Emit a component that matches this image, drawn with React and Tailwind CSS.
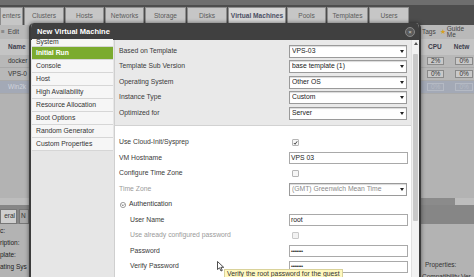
const tabs = [
  { label: 'enters', w: 'w-[23px]' },
  { label: 'Clusters', w: 'w-[40px]' },
  { label: 'Hosts', w: 'w-[39px]' },
  { label: 'Networks', w: 'w-[39px]' },
  { label: 'Storage', w: 'w-[41px]' },
  { label: 'Disks', w: 'w-[40px]' },
  { label: 'Virtual Machines', w: 'w-[58px]', active: true },
  { label: 'Pools', w: 'w-[39px]' },
  { label: 'Templates', w: 'w-[41px]' },
  { label: 'Users', w: 'w-[40px]' },
]

const sideItems = [
  'System',
  'Initial Run',
  'Console',
  'Host',
  'High Availability',
  'Resource Allocation',
  'Boot Options',
  'Random Generator',
  'Custom Properties',
]

function Select({ value, muted }) {
  return (
    <div className="flex h-[13px] w-[118px] items-center border border-[#9a9a9a] bg-white pl-[2px] shadow-[inset_0_1px_1px_rgba(0,0,0,0.15)]">
      <span className={`flex-1 truncate ${muted ? 'text-[#8a8a8a]' : 'text-[#222]'}`}>{value}</span>
      <span className="flex h-[9px] w-[8px] items-center justify-center">
        <span className="block h-0 w-0 border-x-[2px] border-t-[3px] border-x-transparent border-t-[#222]" />
      </span>
    </div>
  )
}

function Input({ value, password }) {
  return (
    <div className="flex h-[12px] w-[119px] items-center border border-[#a9a9a9] bg-white pl-[1px] text-[#222]">
      {password ? <span className="text-[5px] leading-none tracking-[-0.3px]">••••••••</span> : value}
    </div>
  )
}

function Check({ checked, muted }) {
  return (
    <div className={`ml-[3px] flex h-[7px] w-[7px] items-center justify-center rounded-[1px] border ${muted ? 'border-[#c8c8c8] bg-[#f2f2f2]' : 'border-[#b5b5b5] bg-[#f6f6f6]'}`}>
      {checked && (
        <svg width="6" height="6" viewBox="0 0 6 6">
          <path d="M1 3 L2.5 4.5 L5 1" stroke="#333" strokeWidth="1.1" fill="none" />
        </svg>
      )}
    </div>
  )
}

function Row({ label, children, muted, indent, h = 'h-[15.5px]' }) {
  return (
    <div className={`flex items-center ${h}`}>
      <div className={`${indent ? 'w-[174px] pl-[15px]' : 'w-[174px] pl-[4px]'} ${muted ? 'text-[#9a9a9a]' : 'text-[#3a3a3a]'}`}>
        {label}
      </div>
      {children}
    </div>
  )
}

export default function App() {
  return (
    <div
      className="relative h-[277px] w-[474px] overflow-hidden bg-[#b3b3b3] text-[6.8px] leading-none"
      style={{ fontFamily: '"Liberation Sans", Arial, sans-serif' }}
    >
      {/* background page */}
      <div className="flex h-full flex-col">
        <div className="h-[5px] bg-[#6e6e6e]" />
        <div className="flex h-[20px] items-end gap-[1px] bg-[#4d4d4d] pt-[2px]">
          {tabs.map((t) => (
            <div
              key={t.label}
              className={`flex h-full shrink-0 items-center justify-center border border-b-0 border-[#8d8d8d] text-[6.6px] ${t.w} ${t.active ? 'bg-[#d8d8d8] font-bold text-[#4b4f63]' : 'bg-[#c6c6c6] text-[#5b5b5b]'}`}
            >
              {t.label}
            </div>
          ))}
        </div>
        <div className="flex h-[14px] items-center justify-between bg-[#b9b9b9] text-[6.5px] text-[#444]">
          <div className="flex items-center gap-[3px] pl-[1px]">
            <span className="text-[#666]">≡</span>
            <span>Edit</span>
          </div>
          <div className="flex w-[52px] items-center gap-[4px] text-[#444]">
            <span>Tags</span>
            <span className="flex items-center gap-[1px]">
              <span className="text-[#d6a021]">&#9733;</span>Guide Me
            </span>
          </div>
        </div>
        <div className="flex h-[16px] items-center justify-between bg-[#c4c4c4] text-[6.5px] font-bold text-[#3d3d4d]">
          <span className="pl-[8px]">Name</span>
          <div className="flex w-[52px] gap-[12px] pl-[6px]">
            <span>CPU</span>
            <span>Netw</span>
          </div>
        </div>
        {[
          { n: 'docker', c: '2%' },
          { n: 'VPS-0', c: '0%' },
          { n: 'Win2k', c: '0%', sel: true },
        ].map((r) => (
          <div
            key={r.n}
            className={`flex h-[13px] items-center justify-between border-b border-[#a9a9a9] text-[6.5px] ${r.sel ? 'bg-[#a3a9b6] text-[#cfd3dc]' : 'bg-[#b8b8b8] text-[#333]'}`}
          >
            <span className="pl-[8px]">{r.n}</span>
            <div className="flex w-[52px] gap-[11px] pl-[5px]">
              <span className={`border px-[3px] ${r.sel ? 'border-[#b5bac4] text-[#b5bac4]' : 'border-[#8a8a8a] bg-[#c9c9c9]'}`}>{r.c}</span>
              <span className={`border px-[3px] ${r.sel ? 'border-[#b5bac4] text-[#b5bac4]' : 'border-[#8a8a8a] bg-[#c9c9c9]'}`}>0%</span>
            </div>
          </div>
        ))}
        <div className="flex-1" />
        <div className="flex h-[7px] justify-end bg-[#bdbdbd]">
          <div className="mr-[19px] h-full w-[36px] bg-[#8b8b8b]" />
        </div>
        <div className="flex h-[19px] items-end gap-[2px] bg-[#868686]">
          <div className="flex h-[15px] w-[17px] items-center justify-end border border-[#777] bg-[#cfcfcf] pr-[1px] text-[6.5px] text-[#333]">eral</div>
          <div className="flex h-[15px] w-[10px] items-center border border-[#777] bg-[#a9a9a9] pl-[1px] text-[6.5px] text-[#333]">N</div>
        </div>
        <div className="flex h-[53px] justify-between bg-[#b3b3b3] text-[6.5px] text-[#222]">
          <div className="flex flex-col gap-[5.5px] pt-[4px]">
            <span>c:</span>
            <span>ription:</span>
            <span>plate:</span>
            <span>ating Sys</span>
          </div>
          <div className="flex w-[52px] flex-col justify-end gap-[5px] text-[#333]">
            <span className="pl-[3px]">Properties:</span>
            <span className="-mb-[3px]">Compatibility Ver</span>
          </div>
        </div>
      </div>

      {/* dialog */}
      <div className="absolute left-[29px] top-[23px] flex h-[270px] w-[392px] flex-col overflow-hidden rounded-t-[5px] border-x-2 border-[#3b3b3b] bg-white shadow-[0_0_4px_rgba(0,0,0,0.5)]">
        <div className="flex h-[17px] shrink-0 items-center justify-between bg-[#404040] pl-[6px] pr-[4px]">
          <span className="text-[7.5px] font-bold text-white">New Virtual Machine</span>
          <span className="flex h-[10px] w-[10px] items-center justify-center rounded-full border border-[#8a8a8a] bg-[#5a5a5a] text-[6px] text-[#cfcfcf]">×</span>
        </div>
        <div className="flex flex-1">
          {/* sidebar */}
          <div className="flex w-[83px] shrink-0 flex-col bg-[#e6e6e6] px-[1px]">
            {sideItems.map((s, i) => (
              <div
                key={s}
                className={`flex shrink-0 items-center border-b border-[#d6d6d6] pl-[4px] ${i === 0 ? '-mt-[1px] h-[8px]' : 'h-[13px]'} ${s === 'Initial Run' ? 'bg-[#7bab2f] font-bold text-white' : 'bg-[#f6f6f6] text-[#333]'}`}
              >
                {s}
              </div>
            ))}
          </div>
          {/* content */}
          <div className="flex flex-1 flex-col border-l border-[#cfcfcf]">
            <div className="flex flex-col border-b border-[#d2d2d2] bg-[#e9e9e9] pb-[4px] pt-[3px]">
              <Row label="Based on Template" h="h-[16px]"><Select value="VPS-03" /></Row>
              <Row label="Template Sub Version"><Select value="base template (1)" /></Row>
              <Row label="Operating System"><Select value="Other OS" /></Row>
              <Row label="Instance Type"><Select value="Custom" /></Row>
              <Row label="Optimized for"><Select value="Server" /></Row>
            </div>
            <div className="flex flex-col pt-[9px]">
              <Row label="Use Cloud-Init/Sysprep"><Check checked /></Row>
              <Row label="VM Hostname"><Input value="VPS 03" /></Row>
              <Row label="Configure Time Zone"><Check /></Row>
              <Row label="Time Zone" muted><Select value="(GMT) Greenwich Mean Time" muted /></Row>
              <div className="flex h-[15.5px] items-center gap-[3px] pl-[5px] text-[#333]">
                <svg width="6" height="6" viewBox="0 0 6 6">
                  <circle cx="3" cy="3" r="2.6" fill="#fff" stroke="#777" strokeWidth="0.7" />
                  <path d="M1.7 2.4 L3 3.7 L4.3 2.4" stroke="#555" strokeWidth="0.8" fill="none" />
                </svg>
                Authentication
              </div>
              <Row label="User Name" indent><Input value="root" /></Row>
              <Row label="Use already configured password" indent muted><Check muted /></Row>
              <Row label="Password" indent><Input password /></Row>
              <Row label="Verify Password" indent><Input password /></Row>
            </div>
          </div>
          {/* scrollbar */}
          <div className="flex w-[8px] shrink-0 flex-col items-center border-l border-[#e0e0e0] bg-[#f2f2f2]">
            <span className="mt-[2px] block h-0 w-0 border-x-[2px] border-b-[3px] border-x-transparent border-b-[#555]" />
            <div className="mt-[9px] h-[167px] w-[5px] rounded-[1px] bg-[#c9c9c9]" />
          </div>
        </div>
      </div>

      {/* cursor + tooltip */}
      <svg className="absolute left-[217px] top-[261px]" width="8" height="11" viewBox="0 0 8 11">
        <path d="M0.5 0.5 L0.5 8.5 L2.5 6.8 L4 10 L5.3 9.4 L3.9 6.3 L6.7 6.3 Z" fill="#fff" stroke="#222" strokeWidth="0.8" />
      </svg>
      <div className="absolute left-[224px] top-[269px] whitespace-nowrap border border-[#d9d29a] bg-[#fff8bf] px-[2px] py-[1px] text-[6.8px] text-[#333]">
        Verify the root password for the guest
      </div>
    </div>
  )
}
